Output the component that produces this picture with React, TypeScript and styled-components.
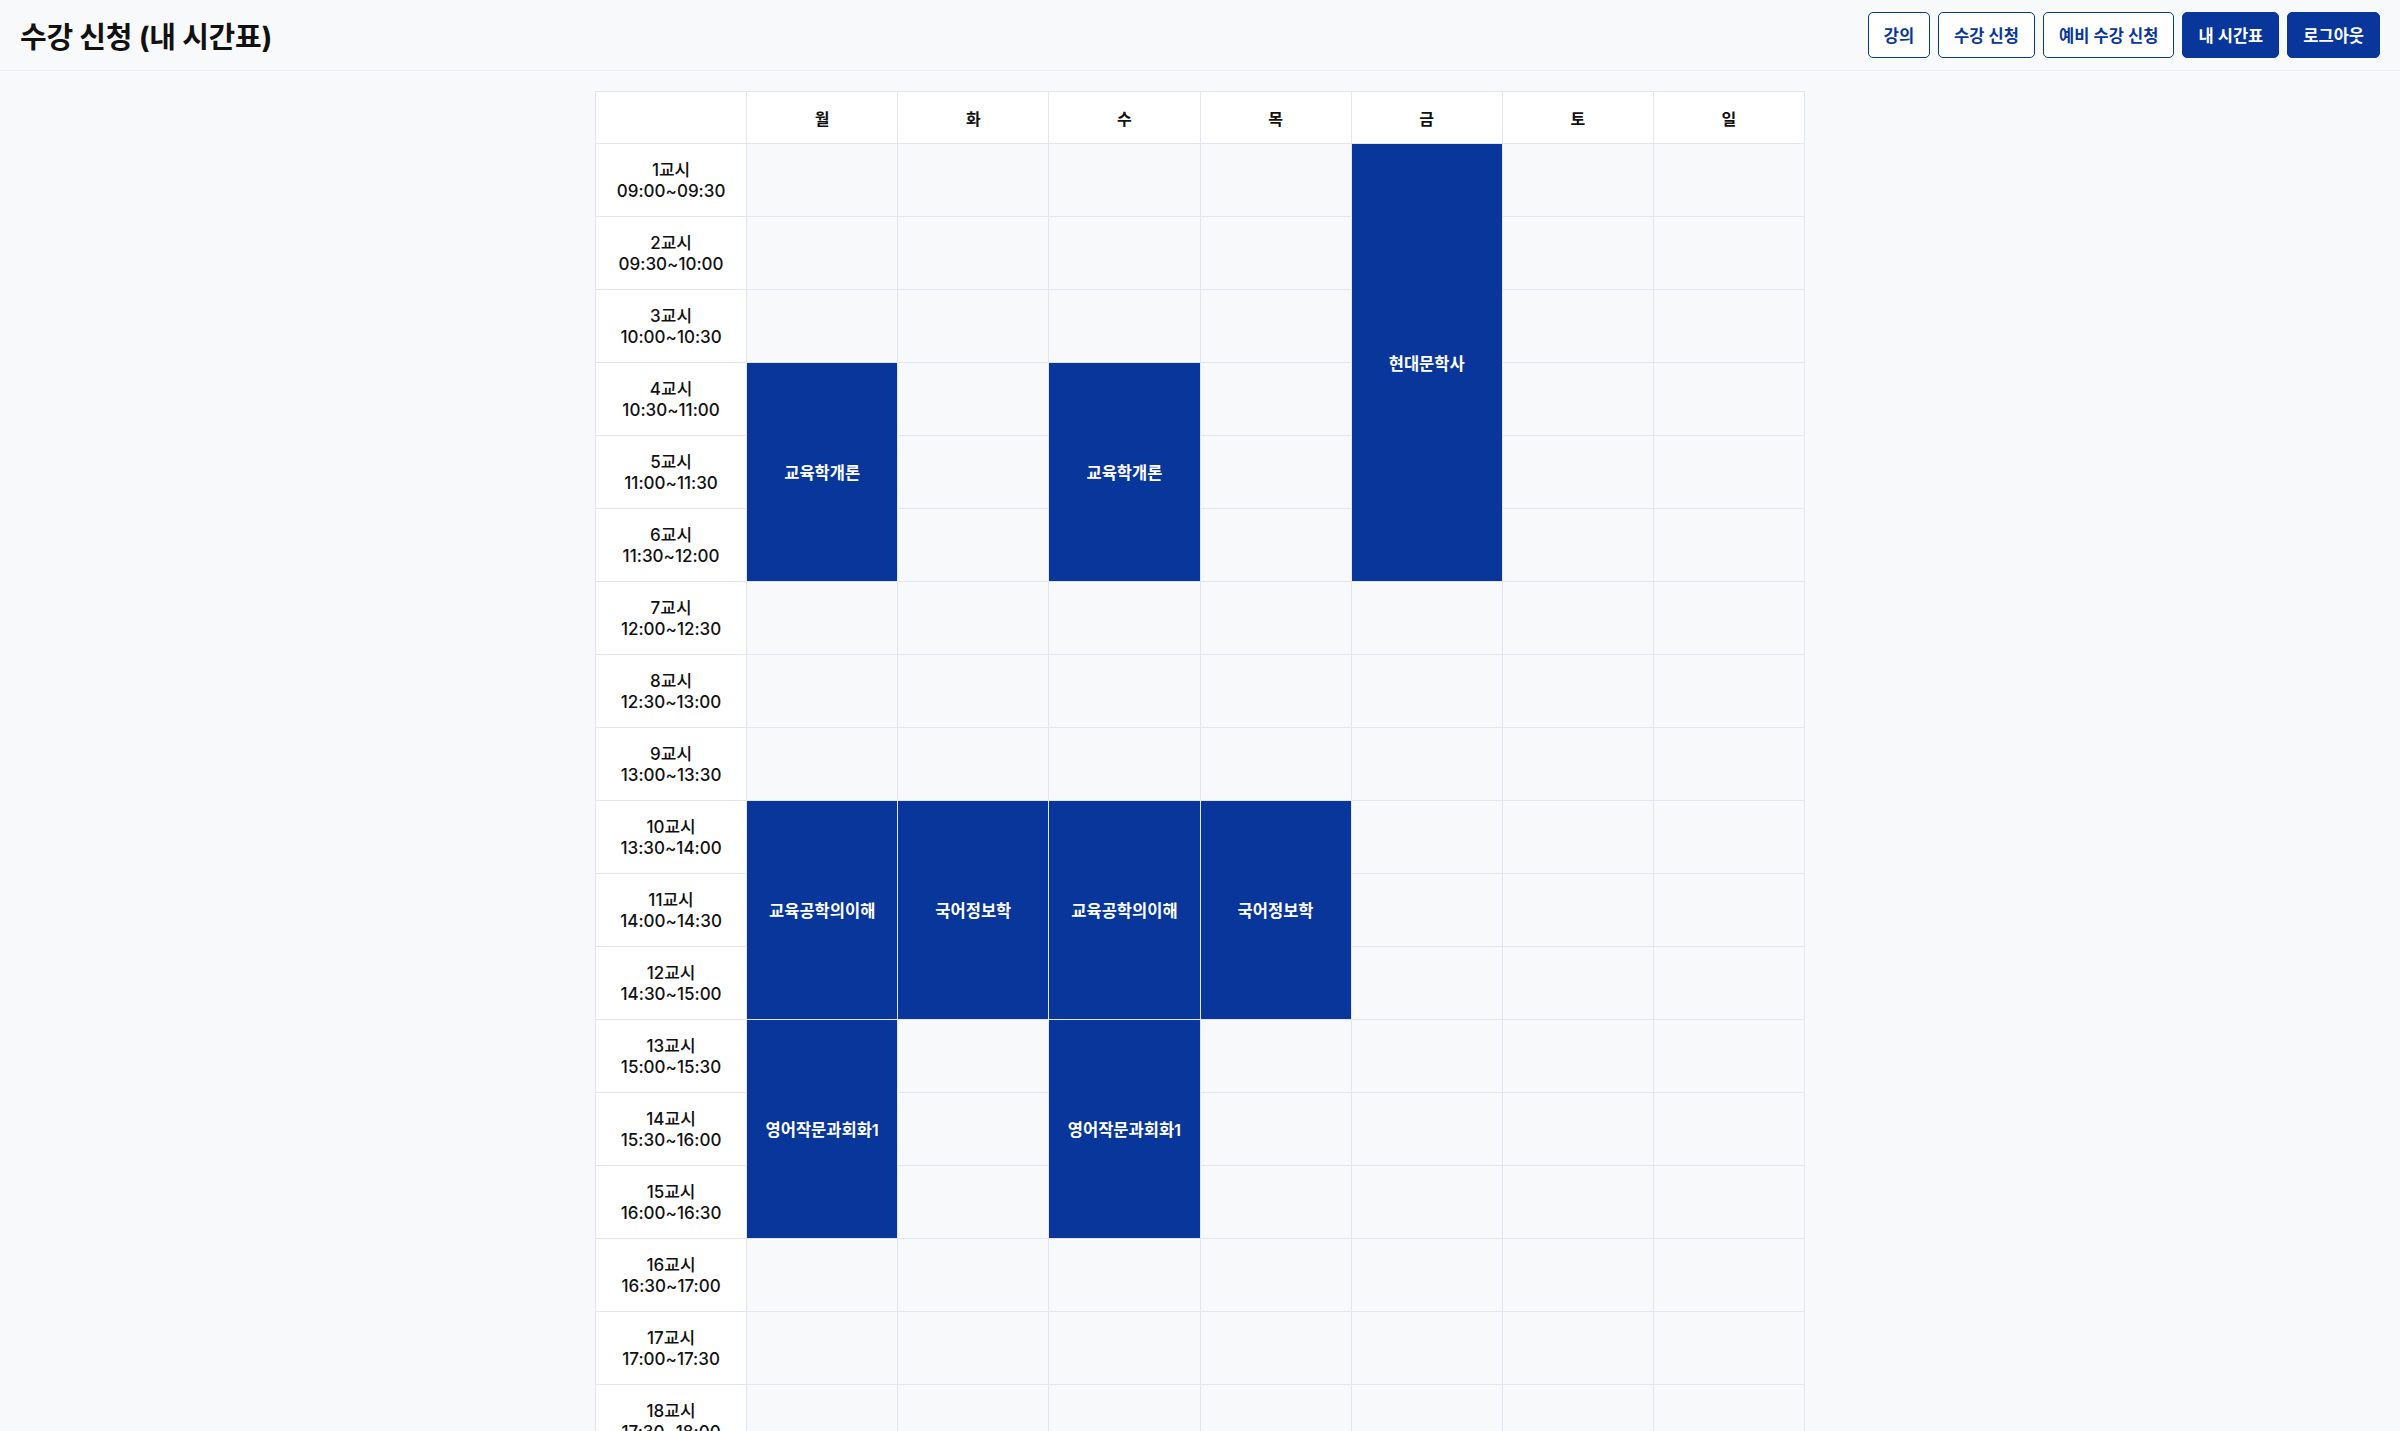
import styled, { createGlobalStyle } from 'styled-components';

const GlobalStyle = createGlobalStyle`
  * { box-sizing: border-box; }
  body {
    margin: 0;
    background: #f8f9fb;
    font-family: Inter, 'Noto Sans CJK KR', sans-serif;
    color: #111;
  }
`;

const Header = styled.header`
  height: 71px;
  display: flex;
  align-items: center;
  justify-content: space-between;
  padding: 0 20px;
  border-bottom: 1px solid #eceef3;
  h1 {
    margin: 0;
    font-size: 29px;
    font-weight: 700;
    letter-spacing: -0.3px;
  }
`;

const Nav = styled.nav`
  display: flex;
  gap: 8px;
`;

const NavButton = styled.button<{ $active?: boolean }>`
  height: 46px;
  padding: 0 15px;
  border: 1px solid #08369a;
  border-radius: 5px;
  background: ${(p) => (p.$active ? '#08369a' : '#fff')};
  color: ${(p) => (p.$active ? '#fff' : '#08369a')};
  font-family: inherit;
  font-size: 16.5px;
  font-weight: 600;
  cursor: pointer;
`;

const Table = styled.table`
  width: 1210px;
  margin: 20px auto 0;
  border-collapse: collapse;
  table-layout: fixed;
  th,
  td {
    border: 1px solid #e3e6f0;
    text-align: center;
    vertical-align: middle;
    padding: 0;
  }
  th {
    height: 52px;
    background: #fff;
    font-size: 16px;
    font-weight: 600;
  }
`;

const TimeCell = styled.td`
  height: 73px;
  background: #fff;
  font-size: 17px;
  font-weight: 500;
  line-height: 21px;
  padding-top: 2px !important;
`;

const EmptyCell = styled.td`
  background: #f8f9fb;
`;

const CourseCell = styled.td`
  background: #08369a;
  color: #fff;
  font-size: 16.5px;
  font-weight: 600;
`;

const days = ['월', '화', '수', '목', '금', '토', '일'];

type Course = { day: number; start: number; span: number; name: string };

const courses: Course[] = [
  { day: 4, start: 1, span: 6, name: '현대문학사' },
  { day: 0, start: 4, span: 3, name: '교육학개론' },
  { day: 2, start: 4, span: 3, name: '교육학개론' },
  { day: 0, start: 10, span: 3, name: '교육공학의이해' },
  { day: 1, start: 10, span: 3, name: '국어정보학' },
  { day: 2, start: 10, span: 3, name: '교육공학의이해' },
  { day: 3, start: 10, span: 3, name: '국어정보학' },
  { day: 0, start: 13, span: 3, name: '영어작문과회화1' },
  { day: 2, start: 13, span: 3, name: '영어작문과회화1' },
];

const fmt = (m: number) =>
  `${String(Math.floor(m / 60)).padStart(2, '0')}:${String(m % 60).padStart(2, '0')}`;

const periods = Array.from({ length: 20 }, (_, i) => i + 1);

export default function App() {
  return (
    <>
      <GlobalStyle />
      <Header>
        <h1>수강 신청 (내 시간표)</h1>
        <Nav>
          <NavButton>강의</NavButton>
          <NavButton>수강 신청</NavButton>
          <NavButton>예비 수강 신청</NavButton>
          <NavButton $active>내 시간표</NavButton>
          <NavButton $active>로그아웃</NavButton>
        </Nav>
      </Header>
      <Table>
        <thead>
          <tr>
            <th />
            {days.map((d) => (
              <th key={d}>{d}</th>
            ))}
          </tr>
        </thead>
        <tbody>
          {periods.map((p) => {
            const startMin = 9 * 60 + (p - 1) * 30;
            return (
              <tr key={p}>
                <TimeCell>
                  {p}교시
                  <br />
                  {fmt(startMin)}~{fmt(startMin + 30)}
                </TimeCell>
                {days.map((_, d) => {
                  const c = courses.find((x) => x.day === d && x.start === p);
                  if (c)
                    return (
                      <CourseCell key={d} rowSpan={c.span}>
                        {c.name}
                      </CourseCell>
                    );
                  const covered = courses.some(
                    (x) => x.day === d && p > x.start && p < x.start + x.span
                  );
                  if (covered) return null;
                  return <EmptyCell key={d} />;
                })}
              </tr>
            );
          })}
        </tbody>
      </Table>
    </>
  );
}
